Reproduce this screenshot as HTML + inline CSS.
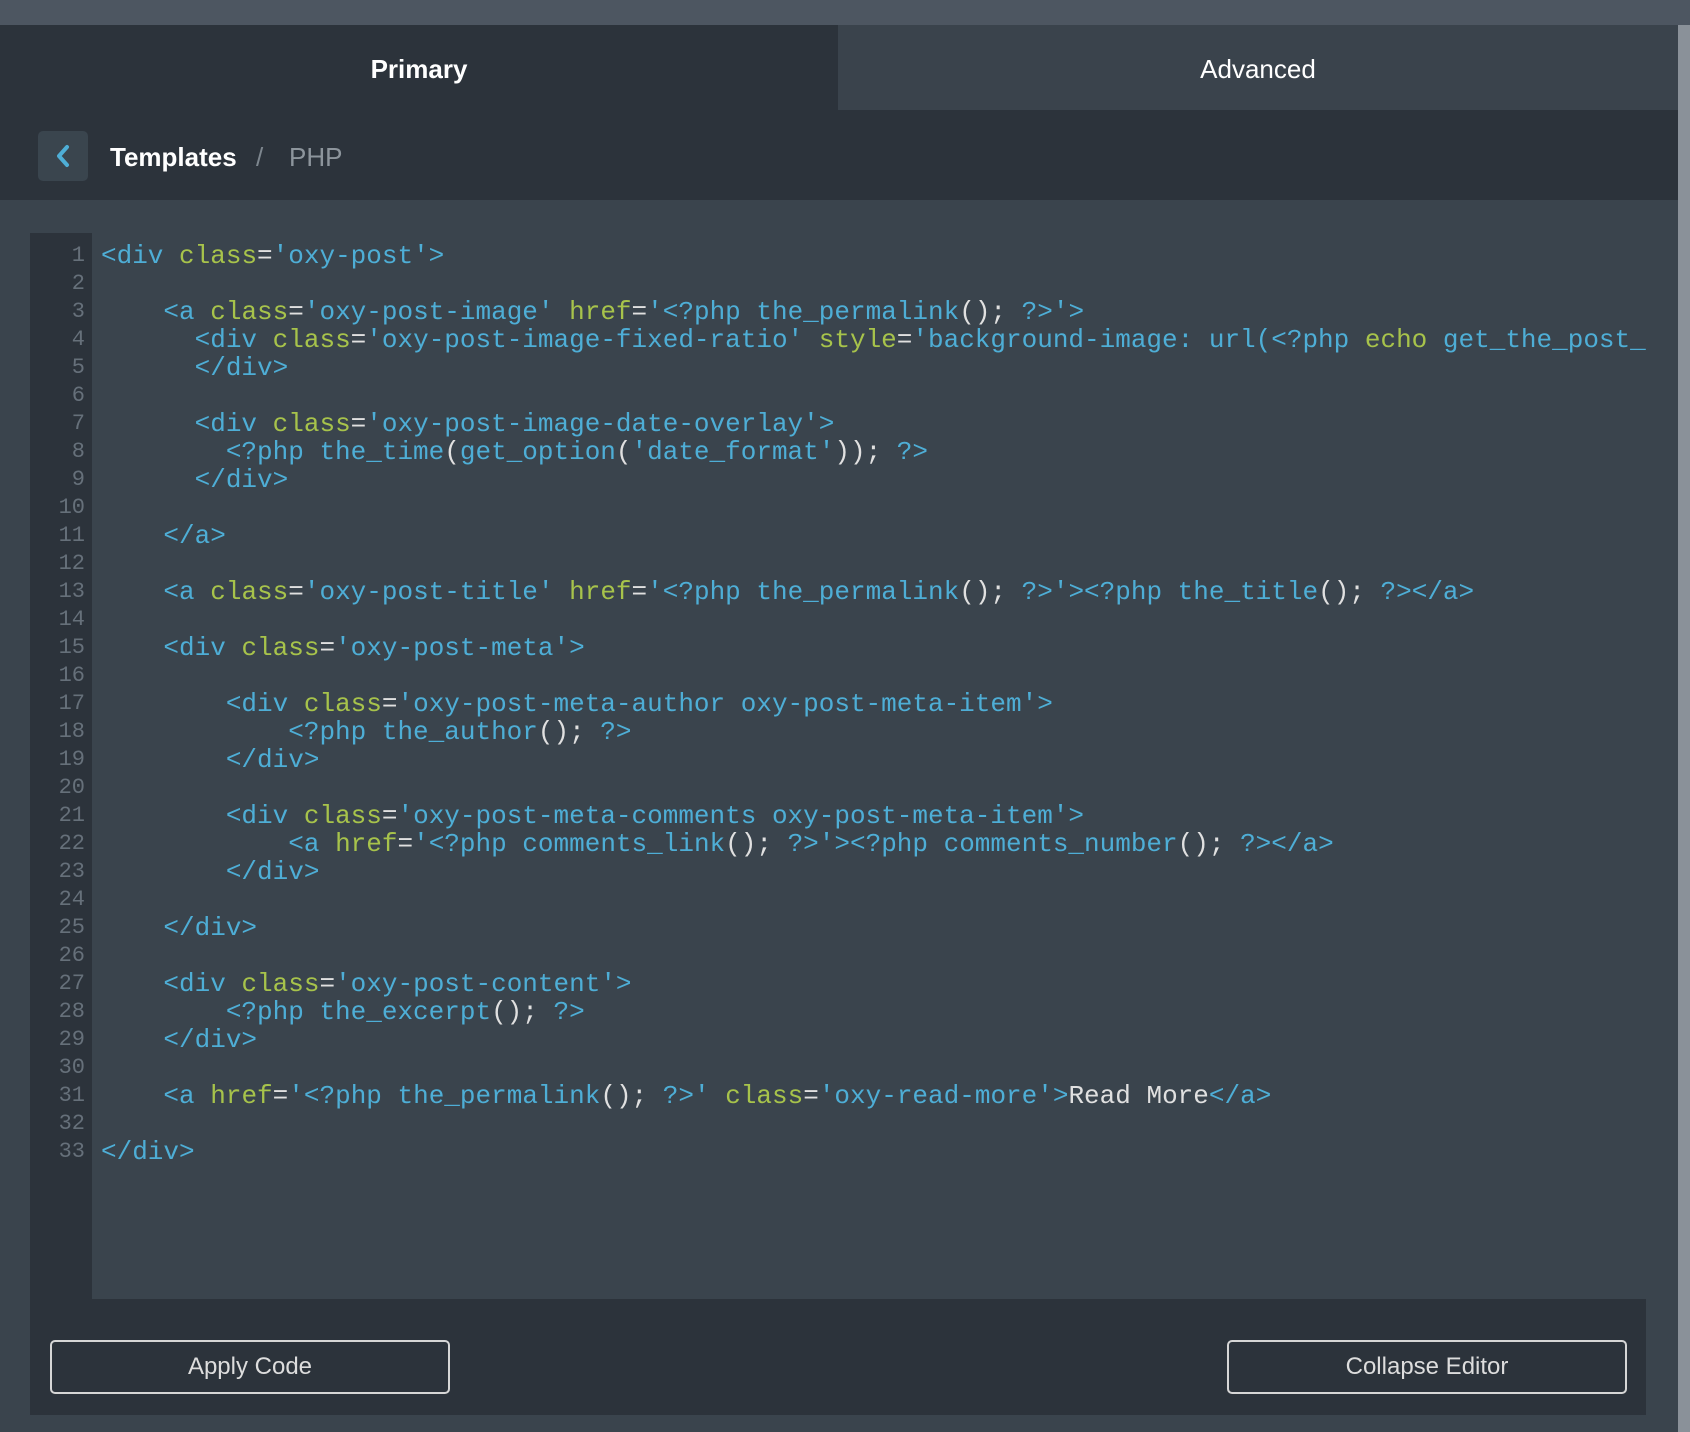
<!DOCTYPE html>
<html><head><meta charset="utf-8"><style>
*{margin:0;padding:0;box-sizing:border-box}
body{width:1690px;height:1432px;background:#3a444d;position:relative;overflow:hidden;font-family:"Liberation Sans",sans-serif}
.top{position:absolute;left:0;top:0;width:1690px;height:25px;background:#4d5661}
.tab{position:absolute;top:25px;height:85px;line-height:88px;text-align:center;font-size:26px;color:#fff}
.t1{left:0;width:838px;background:#2c333b;font-weight:bold}
.t2{left:838px;width:840px;background:#3a434c}
.strip{position:absolute;left:1678px;top:25px;width:12px;height:1407px;background:#8a9199}
.crumb{position:absolute;left:0;top:110px;width:1678px;height:90px;background:#2c333b}
.back{position:absolute;left:38px;top:21px;width:50px;height:50px;background:#3a454e;border-radius:5px}
.crumb .tx{position:absolute;top:24px;font-size:26px;line-height:46px}
.gut{position:absolute;left:30px;top:233px;width:62px;height:1066px;background:#2c333b}
.code{position:absolute;left:92px;top:242px;width:1554px;height:1057px;overflow:hidden;font-family:"Liberation Mono",monospace;font-size:26px;line-height:28px;white-space:pre;color:#e0e0e0}
.ln{position:absolute;left:30px;top:242px;width:55px;text-align:right;font-family:"Liberation Mono",monospace;font-size:22px;line-height:28px;color:#66707a;white-space:pre}
.code div{padding-left:9px}
.b{color:#4eaed6}.g{color:#a7c34b}
.bot{position:absolute;left:30px;top:1299px;width:1616px;height:116px;background:#2c333b}
.btn{position:absolute;top:41px;width:400px;height:54px;border:2px solid #d6d6d6;border-radius:5px;color:#ddd;font-size:24px;text-align:center;line-height:50px}
</style></head><body>
<div class="top"></div>
<div class="tab t1">Primary</div>
<div class="tab t2">Advanced</div>
<div class="strip"></div>
<div class="crumb">
 <div class="back"><svg width="50" height="50" viewBox="0 0 50 50"><path d="M29 16 L21 25 L29 34" stroke="#4eaed6" stroke-width="4" fill="none" stroke-linecap="round" stroke-linejoin="round"/></svg></div>
 <div class="tx" style="left:110px;color:#fff;font-weight:bold">Templates</div>
 <div class="tx" style="left:256px;color:#7d868e">/</div>
 <div class="tx" style="left:289px;color:#8d959c">PHP</div>
</div>
<div class="gut"></div>
<div class="ln">1
2
3
4
5
6
7
8
9
10
11
12
13
14
15
16
17
18
19
20
21
22
23
24
25
26
27
28
29
30
31
32
33</div>
<div class="code"><div><span class="b">&lt;div</span> <span class="g">class</span>=<span class="b">'oxy-post'&gt;</span></div><div> </div><div>    <span class="b">&lt;a</span> <span class="g">class</span>=<span class="b">'oxy-post-image'</span> <span class="g">href</span>=<span class="b">'&lt;?php the_permalink</span>(); <span class="b">?&gt;'&gt;</span></div><div>      <span class="b">&lt;div</span> <span class="g">class</span>=<span class="b">'oxy-post-image-fixed-ratio'</span> <span class="g">style</span>=<span class="b">'background-image: url(&lt;?php</span> <span class="g">echo</span> <span class="b">get_the_post_thumbnail_url(); ?&gt;);'&gt;</span></div><div>      <span class="b">&lt;/div&gt;</span></div><div> </div><div>      <span class="b">&lt;div</span> <span class="g">class</span>=<span class="b">'oxy-post-image-date-overlay'&gt;</span></div><div>        <span class="b">&lt;?php the_time</span>(<span class="b">get_option</span>(<span class="b">'date_format'</span>)); <span class="b">?&gt;</span></div><div>      <span class="b">&lt;/div&gt;</span></div><div> </div><div>    <span class="b">&lt;/a&gt;</span></div><div> </div><div>    <span class="b">&lt;a</span> <span class="g">class</span>=<span class="b">'oxy-post-title'</span> <span class="g">href</span>=<span class="b">'&lt;?php the_permalink</span>(); <span class="b">?&gt;'&gt;&lt;?php the_title</span>(); <span class="b">?&gt;&lt;/a&gt;</span></div><div> </div><div>    <span class="b">&lt;div</span> <span class="g">class</span>=<span class="b">'oxy-post-meta'&gt;</span></div><div> </div><div>        <span class="b">&lt;div</span> <span class="g">class</span>=<span class="b">'oxy-post-meta-author oxy-post-meta-item'&gt;</span></div><div>            <span class="b">&lt;?php the_author</span>(); <span class="b">?&gt;</span></div><div>        <span class="b">&lt;/div&gt;</span></div><div> </div><div>        <span class="b">&lt;div</span> <span class="g">class</span>=<span class="b">'oxy-post-meta-comments oxy-post-meta-item'&gt;</span></div><div>            <span class="b">&lt;a</span> <span class="g">href</span>=<span class="b">'&lt;?php comments_link</span>(); <span class="b">?&gt;'&gt;&lt;?php comments_number</span>(); <span class="b">?&gt;&lt;/a&gt;</span></div><div>        <span class="b">&lt;/div&gt;</span></div><div> </div><div>    <span class="b">&lt;/div&gt;</span></div><div> </div><div>    <span class="b">&lt;div</span> <span class="g">class</span>=<span class="b">'oxy-post-content'&gt;</span></div><div>        <span class="b">&lt;?php the_excerpt</span>(); <span class="b">?&gt;</span></div><div>    <span class="b">&lt;/div&gt;</span></div><div> </div><div>    <span class="b">&lt;a</span> <span class="g">href</span>=<span class="b">'&lt;?php the_permalink</span>(); <span class="b">?&gt;'</span> <span class="g">class</span>=<span class="b">'oxy-read-more'&gt;</span>Read More<span class="b">&lt;/a&gt;</span></div><div> </div><div><span class="b">&lt;/div&gt;</span></div></div>
<div class="bot">
 <div class="btn" style="left:20px">Apply Code</div>
 <div class="btn" style="left:1197px">Collapse Editor</div>
</div>
</body></html>
